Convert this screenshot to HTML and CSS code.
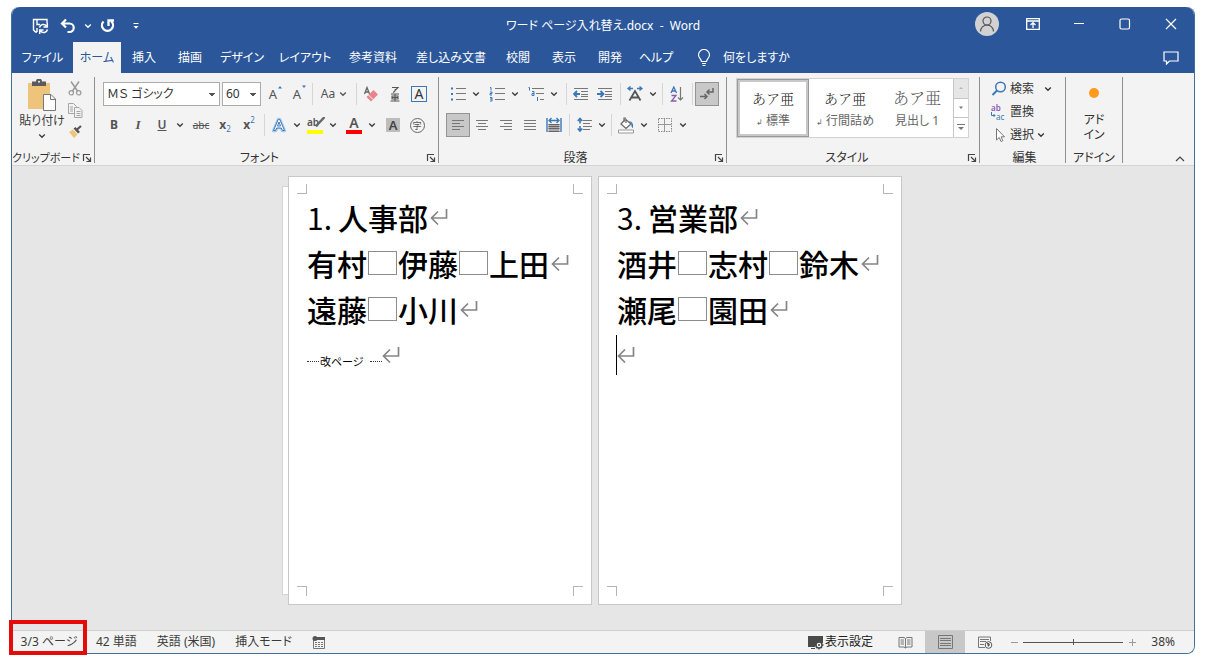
FILE: index.html
```html
<!DOCTYPE html>
<html lang="ja">
<head>
<meta charset="utf-8">
<title>ワード ページ入れ替え.docx - Word</title>
<link rel="stylesheet" href="styles.css">
</head>
<body>
<svg class="defs" aria-hidden="true">
  <symbol id="chev" viewBox="0 0 8 8"><path d="M1.200 2.500 4 5.300 6.800 2.500" fill="none" stroke="currentColor" stroke-width="1.300"/></symbol>
  <symbol id="launch" viewBox="0 0 10 10"><path d="M1.500 8V1.500H8M4 4l4 4M8.500 4.500v4h-4" fill="none" stroke="#444" stroke-width="1.200"/></symbol>
  <symbol id="ret" viewBox="0 0 18 18"><path d="M16.500 1v9H2M8 3.500 1.500 10 8 16.500" fill="none" stroke="#858585" stroke-width="1.700"/></symbol>
</svg>
<div class="window">
  <header class="titlebar">
    <div class="quick">
      <button class="q-btn" aria-label="上書き保存"><svg width="17" height="17" viewBox="0 0 17 17"><path d="M5 14H3.500L1.500 12V1.500H15V5M5 2V6.500H8M5 14v-4" fill="none" stroke="#fff" stroke-width="1.400"/><path d="M7.500 9.500a4 4 0 0 1 7-1.500M15.300 5V9H11.500M15.500 11.500a4 4 0 0 1-7 1.500M7.700 16V12H11.500" fill="none" stroke="#fff" stroke-width="1.500"/></svg></button>
      <button class="q-btn" aria-label="元に戻す"><svg width="16" height="16" viewBox="0 0 16 16"><path d="M6 1.500 2 5.500 6 9.500M2 5.500H9.500a4 4 0 0 1 0 8.500H7.500" fill="none" stroke="#fff" stroke-width="2.200"/></svg></button>
      <button class="chev-btn" aria-label="元に戻すの一覧"><svg width="8" height="8"><use href="#chev"/></svg></button>
      <button class="q-btn" aria-label="やり直し"><svg width="16" height="16" viewBox="0 0 16 16"><path d="M3.500 3.500A5.500 5.500 0 1 0 11.500 3.500M8.500 8V2.500H14" fill="none" stroke="#fff" stroke-width="2.300"/></svg></button>
      <button class="q-btn" aria-label="クイック アクセスの設定"><svg width="8" height="8" viewBox="0 0 8 8"><path d="M1.500 1.500h5" stroke="#fff"/><path d="M1.500 4h5L4 6.800z" fill="#fff"/></svg></button>
    </div>
    <h1 class="doc-title">ワード ページ入れ替え.docx&nbsp; -&nbsp; Word</h1>
    <div class="win-btns">
      <button class="w-btn" aria-label="アカウント"><svg width="24" height="24" viewBox="0 0 24 24"><circle cx="12" cy="12" r="12" fill="#d2d2d2"/><circle cx="12" cy="9" r="4" fill="none" stroke="#555" stroke-width="1.200"/><path d="M5.500 19.500a6.500 6.500 0 0 1 13 0" fill="none" stroke="#555" stroke-width="1.200"/></svg></button>
      <button class="w-btn" aria-label="リボンの表示オプション"><svg width="14" height="12" viewBox="0 0 14 12"><path d="M.7.700H13.300V11.300H.700zM.700 3H13.300M7 10V5M4.500 7 7 4.600 9.500 7" fill="none" stroke="#fff" stroke-width="1.300"/></svg></button>
      <button class="w-btn" aria-label="最小化"><svg width="12" height="12"><path d="M1 5.500h10" stroke="#fff"/></svg></button>
      <button class="w-btn" aria-label="最大化"><svg width="12" height="12"><rect x="1" y="1" width="9.500" height="10" rx="1.500" fill="none" stroke="#fff" stroke-width="1.200"/></svg></button>
      <button class="w-btn" aria-label="閉じる"><svg width="12" height="12"><path d="M1 1 11 11M11 1 1 11" stroke="#fff" stroke-width="1.200"/></svg></button>
    </div>
  </header>

  <nav class="tabs">
    <button class="tab tab-file">ファイル</button>
    <button class="tab tab-active">ホーム</button>
    <button class="tab">挿入</button>
    <button class="tab">描画</button>
    <button class="tab tab-m">デザイン</button>
    <button class="tab tab-l">レイアウト</button>
    <button class="tab tab-l">参考資料</button>
    <button class="tab tab-xl">差し込み文書</button>
    <button class="tab">校閲</button>
    <button class="tab">表示</button>
    <button class="tab">開発</button>
    <button class="tab">ヘルプ</button>
    <button class="tell"><svg width="14" height="18" viewBox="0 0 14 18"><path d="M4.500 12.500C4.500 10 1.500 9 1.500 6a5.300 5.300 0 0 1 11 0c0 3-3 4-3 6.500zM5 14.500h4M5.500 16.500h3" fill="none" stroke="#fff" stroke-width="1.200"/></svg>何をしますか</button>
    <button class="w-btn comment" aria-label="コメント"><svg width="16" height="14" viewBox="0 0 16 14"><path d="M1 1H15V10H6.500L3.500 13V10H1z" fill="none" stroke="#fff" stroke-width="1.200"/></svg></button>
  </nav>

  <div class="ribbon">
    <section class="group g-clip">
      <div class="body clip-body">
        <button class="paste"><svg width="30" height="33" viewBox="0 0 30 33"><path d="M1 4h22v26H1z" fill="#eec47b"/><path d="M5 2.500h4a3 3 0 0 1 6 0h4V7H5z" fill="#5b5b5b"/><circle cx="12" cy="2.800" r="1" fill="#eee"/><path d="M16.500 15.500h7.500l4.500 4.500v11.500h-12zM23.500 15.500v5h5" fill="#fff" stroke="#777"/></svg><span>貼り付け</span><svg width="8" height="8"><use href="#chev"/></svg></button>
        <div class="clip-side">
          <button aria-label="切り取り"><svg width="14" height="15" viewBox="0 0 14 15"><path d="M3 .5 9.500 10M11 .5 4.500 10" stroke="#9a9a9a" stroke-width="1.500"/><circle cx="3.300" cy="11.800" r="2.200" fill="none" stroke="#9a9a9a" stroke-width="1.200"/><circle cx="10.700" cy="11.800" r="2.200" fill="none" stroke="#9a9a9a" stroke-width="1.200"/></svg></button>
          <button aria-label="コピー"><svg width="15" height="15" viewBox="0 0 15 15"><path d="M.5.500h5l3 3v7h-8zM2 4h3M2 6h3M2 8h3" fill="#f3f3f3" stroke="#a5a5a5"/><path d="M6.500 4.500h4.500l3 3v7H6.500zM8.500 8.500h4M8.500 10.500h4M8.500 12.500h4" fill="#f3f3f3" stroke="#a5a5a5"/></svg></button>
          <button aria-label="書式のコピー"><svg width="14" height="14" viewBox="0 0 14 14"><path d="M1 7 5 4.500 9.500 9.500 6 13z" fill="#eec47b"/><path d="M5.500 3.500 7.500 2 12 7 10 8.500z" fill="#555"/><path d="M8.500 5 13 1" stroke="#555" stroke-width="2.200"/></svg></button>
        </div>
      </div>
      <div class="label"><span>クリップボード</span><button class="launch" aria-label="クリップボードの詳細"><svg width="10" height="10"><use href="#launch"/></svg></button></div>
    </section>

    <section class="group g-font">
      <div class="body rows">
        <div class="row">
          <select class="combo combo-font" aria-label="フォント"><option>ＭＳ ゴシック</option></select>
          <select class="combo combo-size" aria-label="フォント サイズ"><option>60</option></select>
          <button class="ic" aria-label="拡大"><span class="glyph">A</span><svg class="mini" width="6" height="4"><path d="M1 3.500 3 1 5 3.500z" fill="#3b78b8"/></svg></button>
          <button class="ic" aria-label="縮小"><span class="glyph">A</span><svg class="mini" width="6" height="4"><path d="M1 .5h4L3 3z" fill="#3b78b8"/></svg></button>
          <i class="sep"></i>
          <button class="ic ic-wide" aria-label="文字種の変換"><span>Aa</span><svg width="8" height="8"><use href="#chev"/></svg></button>
          <i class="sep"></i>
          <button class="ic" aria-label="書式のクリア"><svg width="16" height="17" viewBox="0 0 16 17"><path d="M1.500 8 4 1.500 6.500 8M2.500 6h3" fill="none" stroke="#666" stroke-width="1.300"/><path d="M3.500 11 10.500 4 15 8.500 8 15.500z" fill="#e8838d"/><path d="M5.500 9 10 13.500" stroke="#f3f3f3"/></svg></button>
          <button class="ic" aria-label="ルビ"><svg width="12" height="16" viewBox="0 0 12 16"><path d="M3 1.500h6L6.500 4M6.300 3Q6.500 5.500 4 6.500M2 8h8M3 10h6v3H3zM6 8v7M1.500 15h9M3 11.500h6" fill="none" stroke="#555" stroke-width="1.100"/></svg></button>
          <button class="ic" aria-label="囲み線"><span class="boxed">A</span></button>
        </div>
        <div class="row">
          <button class="ic b">B</button>
          <button class="ic i">I</button>
          <button class="ic u">U</button>
          <button class="chev-btn" aria-label="下線の種類"><svg width="8" height="8"><use href="#chev"/></svg></button>
          <i class="gap"></i>
          <button class="ic s">abc</button>
          <button class="ic b">x<sub>2</sub></button>
          <button class="ic b">x<sup>2</sup></button>
          <i class="sep"></i>
          <button class="ic" aria-label="文字の効果"><svg width="16" height="16" viewBox="0 0 16 16"><path d="M2 14 7 2h2l5 12h-3L10 11H6L5 14z" fill="#fff" stroke="#a9cbef" stroke-width="2.400" stroke-linejoin="round"/><path d="M2.500 13.500 7.200 2.500h1.600l4.700 11h-2L10.300 11H5.700l-1.200 2.500zM6.500 9 8 5l1.500 4z" fill="#fff" stroke="#3b78b8"/></svg></button>
          <button class="chev-btn" aria-label="効果の種類"><svg width="8" height="8"><use href="#chev"/></svg></button>
          <button class="ic" aria-label="蛍光ペン"><span class="ink ink-y">ab</span><svg class="pen" width="10" height="10"><path d="M9.500 0 3 7 1 9.500" stroke="#666" stroke-width="2.300" fill="none"/></svg></button>
          <button class="chev-btn" aria-label="蛍光ペンの色"><svg width="8" height="8"><use href="#chev"/></svg></button>
          <i class="gap"></i>
          <button class="ic" aria-label="フォントの色"><span class="ink ink-r">A</span></button>
          <button class="chev-btn" aria-label="フォントの色一覧"><svg width="8" height="8"><use href="#chev"/></svg></button>
          <i class="gap"></i>
          <button class="ic" aria-label="文字の網かけ"><span class="shaded">A</span></button>
          <button class="ic" aria-label="囲い文字"><span class="circled">字</span></button>
        </div>
      </div>
      <div class="label"><span>フォント</span><button class="launch" aria-label="フォントの詳細"><svg width="10" height="10"><use href="#launch"/></svg></button></div>
    </section>

    <section class="group g-para">
      <div class="body rows">
        <div class="row">
          <button class="ic" aria-label="箇条書き"><svg width="16" height="14" viewBox="0 0 16 14"><path d="M6 1.500h10M6 6.500h10M6 12.500h10" stroke="#777"/><path d="M1 .5h2v2H1zM1 6h2v2H1zM1 11.500h2v2H1z" fill="#3b78b8"/></svg></button>
          <button class="chev-btn" aria-label="箇条書きの種類"><svg width="8" height="8"><use href="#chev"/></svg></button><i class="gap"></i>
          <button class="ic" aria-label="段落番号"><svg width="16" height="16" viewBox="0 0 16 16"><path d="M6 2.500h10M6 7.500h10M6 13.500h10" stroke="#777"/><path d="M1 1.500h1v3M1 6h2v1.500H1V9h2M1 11.500h2v3.500H1M1 13h2" fill="none" stroke="#3b78b8"/></svg></button>
          <button class="chev-btn" aria-label="段落番号の種類"><svg width="8" height="8"><use href="#chev"/></svg></button><i class="gap"></i>
          <button class="ic" aria-label="アウトライン"><svg width="16" height="16" viewBox="0 0 16 16"><path d="M4 2.500h12M8 7.500h8M12 13.500h4" stroke="#777"/><path d="M.5 1.500h1v3M4 5.500h2v4H4V7.500h2M9.500 11v4" fill="none" stroke="#3b78b8"/></svg></button>
          <button class="chev-btn" aria-label="アウトラインの種類"><svg width="8" height="8"><use href="#chev"/></svg></button><i class="gap"></i>
          <i class="sep"></i>
          <button class="ic" aria-label="インデントを減らす"><svg width="16" height="14" viewBox="0 0 16 14"><path d="M1 1.500h14M8 4.500h7M8 7.500h7M8 9.500h7M1 12.500h14" stroke="#777"/><path d="M7 7H1.500M4 4 1 7l3 3" fill="none" stroke="#3b78b8" stroke-width="1.800"/></svg></button>
          <button class="ic" aria-label="インデントを増やす"><svg width="16" height="14" viewBox="0 0 16 14"><path d="M1 1.500h14M8 4.500h7M8 7.500h7M8 9.500h7M1 12.500h14" stroke="#777"/><path d="M0 7h6M3.500 4l3 3-3 3" fill="none" stroke="#3b78b8" stroke-width="1.800"/></svg></button>
          <i class="sep"></i>
          <button class="ic" aria-label="拡張書式"><svg width="16" height="16" viewBox="0 0 16 16"><path d="M2.500 14.500 8 5l5.500 9.500M4.500 11.500h7" fill="none" stroke="#555" stroke-width="1.800"/><path d="M6 2.500H1M3.500.5 1 2.500l2.500 2M10 2.500h5M12.500.5l2.500 2-2.500 2" fill="none" stroke="#3b78b8" stroke-width="1.400"/></svg></button>
          <button class="chev-btn" aria-label="拡張書式の種類"><svg width="8" height="8"><use href="#chev"/></svg></button>
          <i class="sep"></i>
          <button class="ic" aria-label="並べ替え"><svg width="14" height="16" viewBox="0 0 14 16"><path d="M1 7 3.800 1 6.500 7M2 5h3.500" fill="none" stroke="#3b78b8" stroke-width="1.300"/><path d="M1.500 9.500H6L1.500 15H6.500" fill="none" stroke="#8a5ab5" stroke-width="1.300"/><path d="M10.500 1v13M8 11.500l2.500 2.500 2.500-2.500" fill="none" stroke="#777" stroke-width="1.200"/></svg></button>
          <i class="sep"></i>
          <button class="ic on" aria-label="編集記号の表示"><svg width="16" height="14" viewBox="0 0 16 14"><path d="M14 1v4H8M10.500 2.500 8 5l2.500 2.500M1 9.500h7M5.500 7 8 9.500 5.500 12" fill="none" stroke="#666" stroke-width="1.500"/></svg></button>
        </div>
        <div class="row">
          <button class="ic on" aria-label="左揃え"><svg width="14" height="12"><path d="M1 1.500h12M1 4.500h8M1 7.500h12M1 10.500h8" stroke="#777"/></svg></button>
          <button class="ic" aria-label="中央揃え"><svg width="14" height="12"><path d="M1 1.500h12M3 4.500h8M1 7.500h12M3 10.500h8" stroke="#777"/></svg></button>
          <button class="ic" aria-label="右揃え"><svg width="14" height="12"><path d="M1 1.500h12M5 4.500h8M1 7.500h12M5 10.500h8" stroke="#777"/></svg></button>
          <button class="ic" aria-label="両端揃え"><svg width="14" height="12"><path d="M1 1.500h12M1 4.500h12M1 7.500h12M1 10.500h12" stroke="#777"/></svg></button>
          <button class="ic" aria-label="均等割り付け"><svg width="16" height="16" viewBox="0 0 16 16"><path d="M1 1v14M15 1v14" stroke="#3b78b8" stroke-width="1.400"/><path d="M3 3.500h10M5.500 1 3 3.500 5.500 6M10.500 1 13 3.500 10.500 6" fill="none" stroke="#3b78b8" stroke-width="1.300"/><path d="M2.500 7h11v8h-11z" fill="#aaa"/><path d="M2.500 7.500h11M2.500 9.500h11M2.500 11.500h11M2.500 14.500h11" stroke="#666"/></svg></button>
          <i class="sep"></i>
          <button class="ic" aria-label="行間"><svg width="15" height="16" viewBox="0 0 15 16"><path d="M6 3.500h9M6 6.500h7M6 9.500h9M6 12.500h7" stroke="#777"/><path d="M3 1.500v5M3 9v5M.7 4 3 1.500 5.300 4M.700 11.500 3 14l2.300-2.500" fill="none" stroke="#3b78b8" stroke-width="1.600"/></svg></button>
          <button class="chev-btn" aria-label="行間の種類"><svg width="8" height="8"><use href="#chev"/></svg></button>
          <i class="sep"></i>
          <button class="ic" aria-label="塗りつぶし"><svg width="18" height="17" viewBox="0 0 18 17"><path d="M8 2.500 4 7l5 4.500 5-4.500-5-4.500V6M7 5V1h2" fill="#fff" stroke="#666" stroke-width="1.200"/><path d="M12 4q5 1 4 7Q14 10.500 14.500 7z" fill="#3b78b8"/><path d="M1.500 13h15v3h-15z" fill="#fff" stroke="#999"/></svg></button>
          <button class="chev-btn" aria-label="塗りつぶしの色"><svg width="8" height="8"><use href="#chev"/></svg></button><i class="gap"></i>
          <button class="ic" aria-label="罫線"><svg width="14" height="14"><path d="M.5.500h13v13H.500z" fill="none" stroke="#888" stroke-dasharray="1.500 1"/><path d="M6.500 1v12M1 6.500h12" stroke="#999"/></svg></button>
          <button class="chev-btn" aria-label="罫線の種類"><svg width="8" height="8"><use href="#chev"/></svg></button>
        </div>
      </div>
      <div class="label"><span>段落</span><button class="launch" aria-label="段落の詳細"><svg width="10" height="10"><use href="#launch"/></svg></button></div>
    </section>

    <section class="group g-style">
      <div class="body">
        <div class="gallery">
          <button class="style style-on"><span class="sample">あア亜</span><span class="name"><small>↲</small> 標準</span></button>
          <button class="style"><span class="sample">あア亜</span><span class="name"><small>↲</small> 行間詰め</span></button>
          <button class="style"><span class="sample sample-h">あア亜</span><span class="name">見出し 1</span></button>
          <div class="scroller">
            <button class="off" aria-label="上へ"><svg width="6" height="4"><path d="M1 3 3 1 5 3z" fill="#b5b5b5"/></svg></button>
            <button aria-label="下へ"><svg width="6" height="4"><path d="M1 .5h4L3 3z" fill="#777"/></svg></button>
            <button aria-label="その他"><svg width="8" height="7"><path d="M0 .5h8" stroke="#777"/><path d="M1 3h6L4 6z" fill="#777"/></svg></button>
          </div>
        </div>
      </div>
      <div class="label"><span>スタイル</span><button class="launch" aria-label="スタイルの詳細"><svg width="10" height="10"><use href="#launch"/></svg></button></div>
    </section>

    <section class="group g-edit">
      <div class="body edit-body">
        <button><svg width="16" height="16" viewBox="0 0 16 16"><circle cx="9.500" cy="6" r="4.800" fill="none" stroke="#3b78b8" stroke-width="1.500"/><path d="M6 9.500 1.500 14" stroke="#3b78b8" stroke-width="2"/></svg>検索<svg class="far" width="8" height="8"><use href="#chev"/></svg></button>
        <button><span class="repl"><b>ab</b><span><svg width="5" height="6"><path d="M.5 0v3.500H4M2.500 2 4 3.500 2.500 5" fill="none" stroke="#3b78b8"/></svg>ac</span></span>置換</button>
        <button><svg width="16" height="16" viewBox="0 0 16 16"><path d="M5.500 1.500v11.500l2.800-2.500 1.700 4 1.800-.8-1.700-3.900h3.400z" fill="#fff" stroke="#777"/></svg>選択<svg width="8" height="8"><use href="#chev"/></svg></button>
      </div>
      <div class="label"><span>編集</span></div>
    </section>

    <section class="group g-addin">
      <div class="body">
        <button class="addin"><svg width="12" height="12"><circle cx="6" cy="6" r="5" fill="#ff9a1f"/></svg><span>アド<br>イン</span></button>
      </div>
      <div class="label"><span>アドイン</span></div>
    </section>
    <button class="collapse" aria-label="リボンを折りたたむ"><svg width="12" height="8"><path d="M2 6 6 2 10 6" fill="none" stroke="#444" stroke-width="1.200"/></svg></button>
  </div>

  <main class="canvas">
    <div class="sliver"></div>
    <article class="page">
      <div class="marks marks-top"><i></i><i></i></div>
      <div class="text">
        <p><span class="num">1.</span>人事部<svg class="ret"><use href="#ret"/></svg></p>
        <p>有村<i class="sp"></i>伊藤<i class="sp"></i>上田<svg class="ret"><use href="#ret"/></svg></p>
        <p>遠藤<i class="sp"></i>小川<svg class="ret"><use href="#ret"/></svg></p>
        <p class="break"><i></i><span>改ページ</span><i></i><svg class="ret"><use href="#ret"/></svg></p>
      </div>
      <div class="marks marks-bottom"><i></i><i></i></div>
    </article>
    <article class="page">
      <div class="marks marks-top"><i></i><i></i></div>
      <div class="text">
        <p><span class="num">3.</span>営業部<svg class="ret"><use href="#ret"/></svg></p>
        <p>酒井<i class="sp"></i>志村<i class="sp"></i>鈴木<svg class="ret"><use href="#ret"/></svg></p>
        <p>瀬尾<i class="sp"></i>園田<svg class="ret"><use href="#ret"/></svg></p>
        <p class="caret"><svg class="ret"><use href="#ret"/></svg></p>
      </div>
      <div class="marks marks-bottom"><i></i><i></i></div>
    </article>
  </main>

  <footer class="status">
    <button class="st st-page">3/3 ページ</button>
    <button class="st">42 単語</button>
    <button class="st">英語 (米国)</button>
    <button class="st">挿入モード</button>
    <button class="st" aria-label="マクロの記録"><svg width="14" height="13" viewBox="0 0 14 13"><path d="M1.500 4v8.500h11V4" fill="none" stroke="#777"/><path d="M5 1h8v3H5z" fill="#555"/><circle cx="3" cy="2.500" r="2.500" fill="#555"/><path d="M3 6.500h8M3 8.500h8M3 10.500h8" stroke="#777" stroke-dasharray="2 1"/></svg></button>
    <div class="st-right">
      <button class="display"><svg width="16" height="15" viewBox="0 0 16 15"><path d="M0 1h15v7H9l-2 4H0z" fill="#4a4a4a"/><path d="M3 13.500h4" stroke="#4a4a4a"/><circle cx="11" cy="10" r="3" fill="#f3f3f3" stroke="#4a4a4a" stroke-width="1.400"/><path d="M11 5.500V7M11 13v1.500M6.500 10H8M14 10h1.500M8 7l1 1M13 12l1 1M14 7l-1 1M9 12l-1 1" stroke="#4a4a4a" stroke-width="1.300"/><circle cx="11" cy="10" r="1" fill="#4a4a4a"/></svg>表示設定</button>
      <button class="view" aria-label="閲覧モード"><svg width="15" height="13" viewBox="0 0 15 13"><path d="M1 1.500h5l1.500 1L9 1.500h5v9.500H9l-1.500 1L6 11H1zM7.500 2.500V12M2.500 4H6M2.500 6H6M2.500 8H6M9 4h3.500M9 6h3.500M9 8h3.500" fill="none" stroke="#777"/></svg></button>
      <button class="view view-on" aria-label="印刷レイアウト"><svg width="15" height="14" viewBox="0 0 15 14"><path d="M.5.500h14v13H.500zM2 3.500h11M2 5.500h11M2 8.500h11M2 10.500h11" fill="none" stroke="#777"/></svg></button>
      <button class="view" aria-label="Web レイアウト"><svg width="15" height="13" viewBox="0 0 15 13"><path d="M12.500 5V1H.500v10.500H7M2 3.500h9M2 5.500h6M2 8.500h4" fill="none" stroke="#777"/><circle cx="10.500" cy="9" r="3.300" fill="#fff" stroke="#555"/><path d="M9 7h2l1 2-2 2z" fill="#555"/></svg></button>
      <button class="zoom-btn" aria-label="縮小表示"><svg width="9" height="9"><path d="M1 4.500h7" stroke="#999"/></svg></button>
      <input class="zoom" type="range" min="0" max="100" value="50" aria-label="ズーム">
      <button class="zoom-btn" aria-label="拡大表示"><svg width="9" height="9"><path d="M1 4.500h7M4.500 1v7" stroke="#999"/></svg></button>
      <button class="pct">38%</button>
    </div>
  </footer>
</div>
</body>
</html>
```
FILE: styles.css
```css
*, *::before, *::after { box-sizing: border-box; }

body {
  margin: 0;
  padding: 7px 14px 11px 11px;
  min-height: 100vh;
  display: flex;
  background: #fff;
  color: #3b3b3b;
  font: 12px/16px "Noto Sans", "Noto Sans CJK JP", sans-serif;
  font-feature-settings: "palt";
}

button {
  display: flex;
  align-items: center;
  justify-content: center;
  margin: 0;
  padding: 0;
  border: 0;
  background: none;
  color: inherit;
  font: inherit;
  font-feature-settings: inherit;
  white-space: nowrap;
}

svg { flex: none; }
.defs { position: absolute; width: 0; height: 0; }

.window {
  flex: 1;
  min-width: 0;
  display: flex;
  flex-direction: column;
  border: 1px solid #41719c;
  border-top: 0;
  border-radius: 8px 8px 8px 0;
}

/* Title bar */
.titlebar {
  display: grid;
  grid-template-columns: 1fr auto 1fr;
  height: 35px;
  background: #2b579a;
  color: #fff;
  border-radius: 8px 8px 0 0;
}
.quick { display: flex; align-items: center; padding-left: 14px; }
.q-btn { width: 28px; height: 28px; }
.chev-btn { width: 12px; height: 24px; }
.doc-title { margin: 0; font-size: 12px; font-weight: 400; line-height: 38px; white-space: nowrap; }
.win-btns { display: flex; justify-content: flex-end; }
.w-btn { width: 46px; height: 34px; }

/* Tabs */
.tabs { display: flex; height: 31px; background: #2b579a; color: #fff; }
.tab { width: 46px; padding-top: 1px; }
.tab-file { width: 61px; }
.tab-m { width: 58px; }
.tab-l { width: 68px; }
.tab-xl { width: 88px; }
.tab-active { width: 48px; background: #f3f3f3; color: #2b579a; }
.tell { margin-left: 18px; gap: 12px; padding-top: 1px; }
.comment { margin-left: auto; height: 31px; }

/* Ribbon */
.ribbon { display: flex; height: 93px; padding-top: 4px; background: #f3f3f3; border-bottom: 1px solid #d4d4d4; }
.group { display: flex; flex-direction: column; height: 86px; border-right: 1px solid #8f8f8f; }
.g-clip { width: 83px; }
.g-font { width: 344px; padding-left: 7px; }
.g-para { width: 288px; padding-left: 7px; }
.g-style { width: 253px; padding-left: 9px; }
.g-edit { width: 86px; padding-left: 11px; }
.g-addin { width: 57px; }
.body { flex: 1; }
.label { display: flex; align-items: center; height: 11px; margin-left: -7px; color: #333; }
.g-clip .label, .g-addin .label { margin-left: 0; }
.g-clip .label { font-size: 11px; }
.label span { flex: 1; text-align: center; white-space: nowrap; }
.launch { width: 14px; height: 14px; }

.clip-body { display: flex; padding-left: 8px; }
.paste { flex-direction: column; justify-content: flex-start; width: 44px; padding-top: 2px; }
.paste > span { line-height: 18px; }
.paste > svg:last-child { margin-top: 2px; }
.clip-side { display: flex; flex-direction: column; width: 22px; }
.clip-side button { height: 22px; }

.rows { display: flex; flex-direction: column; gap: 7px; padding-top: 5px; }
.row { display: flex; align-items: center; height: 24px; }
.ic { position: relative; width: 24px; height: 24px; color: #555; }
.ic-wide { width: 38px; gap: 4px; }
.gap { width: 3px; }
.sep { width: 6px; height: 22px; background: linear-gradient(#d6d6d6, #d6d6d6) center / 1px 100% no-repeat; }
.on { background: #c8c8c8; border: 1px solid #949494; }
.combo {
  height: 24px;
  margin-right: 2px;
  padding: 0 4px 0 3px;
  border: 1px solid #ababab;
  border-radius: 0;
  appearance: none;
  background-color: #fff;
  background-image: linear-gradient(to bottom right, #555 50%, transparent 51%), linear-gradient(to bottom left, #555 50%, transparent 51%);
  background-size: 3px 3px;
  background-position: right 4px center, right 7px center;
  background-repeat: no-repeat;
  color: #333;
  font: inherit;
  font-feature-settings: inherit;
}
.combo-font { width: 117px; margin-left: 1px; }
.combo-size { width: 39px; margin-right: 0; }
.glyph { font-size: 13px; }
.mini { position: absolute; top: 3px; right: 2px; }
.boxed { width: 16px; height: 16px; border: 1px solid #3b78b8; font: 14px/14px "Noto Sans", sans-serif; color: #333; }
.b { font-weight: 700; }
.i { font: italic 700 13px "Liberation Serif", serif; }
.u { text-decoration: underline; font-weight: 600; }
.s { text-decoration: line-through; font-size: 10px; }
sub, sup { color: #3b78b8; font-size: 8px; line-height: 8px; font-weight: 400; }
sub { align-self: flex-end; margin-bottom: 4px; }
sup { align-self: flex-start; margin-top: 3px; }
.ink { width: 16px; height: 17px; border-bottom: 4px solid #ff0; font-size: 10px; line-height: 11px; }
.ink-y { text-align: left; font-weight: 600; }
.ink-r { border-color: #f00; font-size: 14px; line-height: 12px; font-weight: 600; }
.pen { position: absolute; top: 4px; right: 2px; }
.shaded { width: 14px; height: 14px; background: #bdbdbd; color: #444; font-size: 13px; line-height: 14px; font-weight: 600; }
.circled { width: 15px; height: 15px; border: 1px solid #666; border-radius: 50%; font-size: 9px; line-height: 13px; }

.gallery { display: flex; width: 233px; height: 60px; margin-top: 1px; border: 1px solid #d2d2d2; background: #fff; }
.style { width: 72px; flex-direction: column; gap: 5px; padding-top: 1px; color: #666; }
.style-on { border: 3px solid #c8c8c8; outline: 1px solid #999; outline-offset: -1px; }
.sample { color: #222; font: 14px/20px "Noto Serif CJK JP", "Noto Sans CJK JP", serif; font-weight: 300; font-feature-settings: normal; }
.sample-h { color: #555; font-size: 16px; }
.name small { font-size: 8px; }
.scroller { display: flex; flex-direction: column; width: 15px; border-left: 1px solid #c6c6c6; }
.scroller button { flex: 1; border-bottom: 1px solid #c6c6c6; }
.scroller button:last-child { border-bottom: 0; }
.scroller .off { background: #e6e6e6; }

.edit-body button { height: 23px; gap: 3px; color: #333; }
.edit-body .far { margin-left: 7px; }
.repl { display: flex; flex-direction: column; width: 16px; font-size: 8px; line-height: 9px; text-align: left; color: #555; }
.repl b { color: #8a5ab5; font-weight: 600; }
.repl > span { display: flex; color: #3b78b8; }
.addin { flex-direction: column; width: 100%; gap: 13px; padding-top: 10px; line-height: 15px; color: #333; }
.collapse { margin: auto 8px 2px auto; }

/* Document canvas */
.canvas { flex: 1; display: flex; justify-content: center; align-items: flex-start; padding: 10px 22px 0 0; background: #e6e6e6; }
.sliver { width: 6px; height: 409px; margin-top: 10px; background: #fff; border: 1px solid #d4d4d4; border-right: 0; }
.page { display: flex; flex-direction: column; width: 304px; height: 429px; padding: 7px 8px 8px; background: #fff; border: 1px solid #c8c8c8; color: #000; }
.page + .page { margin-left: 6px; }
.marks { display: flex; justify-content: space-between; }
.marks i { width: 10px; height: 10px; border: 0 solid #b5b5b5; }
.marks-top i { border-bottom-width: 1px; }
.marks-bottom i { border-top-width: 1px; }
.marks i:first-child { border-right-width: 1px; }
.marks i:last-child { border-left-width: 1px; }
.text { flex: 1; padding-left: 10px; }
.text p {
  position: relative;
  display: flex;
  align-items: center;
  height: 46px;
  margin: 0;
  font: 500 30px/44px "Noto Sans CJK JP", sans-serif;
  font-feature-settings: normal;
  white-space: nowrap;
}
.num { width: 31px; font-weight: 400; }
.sp { width: 29px; height: 24px; margin: 0 1px; border: 1px solid #8c8c8c; }
.ret { width: 18px; height: 18px; }
.text p:not(.caret, .break) .ret { margin-left: 2px; }
.text .break span { margin: 12px 6px 0 1px; font-size: 11px; line-height: 16px; font-feature-settings: "palt"; font-weight: 400; }
.break i { width: 12px; margin-top: 13px; border-top: 1px dotted #333; }
.caret::before { content: ""; position: absolute; left: -1px; top: 3px; width: 1px; height: 40px; background: #000; }

/* Status bar */
.status { display: flex; height: 23px; background: #f3f3f3; border-top: 1px solid #cfcfcf; border-radius: 0 0 8px 0; }
.st { padding: 0 10px; }
.st-page { position: relative; width: 74px; }
.st-page::after { content: ""; position: absolute; left: -3px; top: -11px; width: 78px; height: 35px; border: 4px solid #e60b0b; }
.st-right { display: flex; align-items: center; margin-left: auto; padding-right: 19px; }
.display { gap: 1px; margin-right: 12px; color: #222; }
.view { width: 40px; height: 22px; }
.view-on { background: #c8c8c8; }
.zoom-btn { width: 18px; height: 22px; }
.zoom { width: 100px; height: 16px; margin: 0; appearance: none; background: linear-gradient(#555, #555) center / 100% 1px no-repeat; }
.zoom::-webkit-slider-thumb { appearance: none; width: 1px; height: 6px; background: #555; }
.pct { width: 34px; justify-content: flex-end; }
```
